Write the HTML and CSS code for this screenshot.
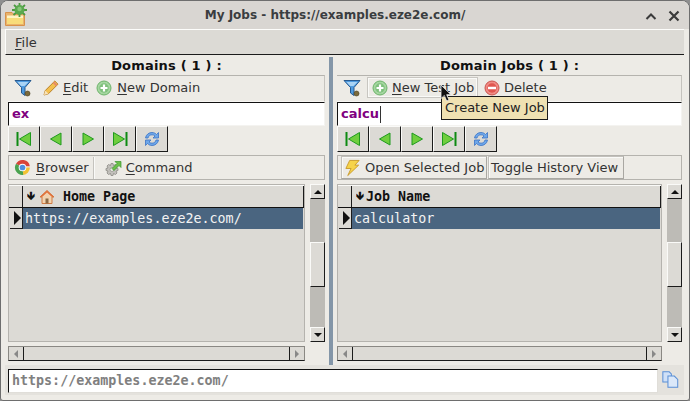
FILE: index.html
```html
<!DOCTYPE html>
<html lang="en">
<head>
<meta charset="utf-8">
<title>My Jobs</title>
<link rel="stylesheet" href="styles.css">
</head>
<body>
<svg class="defs" width="0" height="0" aria-hidden="true">
  <defs>
    <symbol id="filter" viewBox="0 0 18 18">
      <path d="M1 1.500H17L11 8.500V16.500L7.500 14V8.500Z" fill="#4f9be0" stroke="#27598f" stroke-width="1"/>
      <path d="M3.500 3H14.500L10.500 7H7Z" fill="#a9d3f5"/>
      <circle cx="13.500" cy="14.500" r="2.500" fill="#7b6a3c" stroke="#4a3f22" stroke-width=".6"/>
    </symbol>
    <symbol id="pencil" viewBox="0 0 16 16">
      <path d="M1 15L2.200 10.600 11.800 1 15 4.200 5.400 13.800Z" fill="#f3c04f" stroke="#b9822a" stroke-width="1"/>
      <path d="M1 15L2.200 10.600 5.400 13.800Z" fill="#f7e3bb"/>
      <path d="M10.500 2.300L13.700 5.500" stroke="#e78b66" stroke-width="2"/>
    </symbol>
    <symbol id="plus" viewBox="0 0 16 16">
      <circle cx="8" cy="8" r="7" fill="#a5d6a0" stroke="#6db36a" stroke-width="1"/>
      <circle cx="8" cy="8" r="4.700" fill="#7fc07c"/>
      <path d="M8 4.500V11.500M4.500 8H11.500" stroke="#fff" stroke-width="2.200"/>
    </symbol>
    <symbol id="minus" viewBox="0 0 16 16">
      <circle cx="8" cy="8" r="7" fill="#ef8b85" stroke="#c9544d" stroke-width="1"/>
      <circle cx="8" cy="8" r="4.700" fill="#e0564f"/>
      <path d="M4 8H12" stroke="#fff" stroke-width="2.400"/>
    </symbol>
    <symbol id="first" viewBox="0 0 16 16">
      <path d="M1.500 1V15" stroke="#0d8a12" stroke-width="2"/>
      <path d="M14.500 1.500V14.500L3.500 8Z" fill="#6fce3e" stroke="#1e9a1e" stroke-width="1"/>
    </symbol>
    <symbol id="prev" viewBox="0 0 16 16">
      <path d="M13 2V14L2.500 8Z" fill="#6fce3e" stroke="#1e9a1e" stroke-width="1"/>
    </symbol>
    <symbol id="next" viewBox="0 0 16 16">
      <path d="M3 2V14L13.500 8Z" fill="#6fce3e" stroke="#1e9a1e" stroke-width="1"/>
    </symbol>
    <symbol id="last" viewBox="0 0 16 16">
      <path d="M1.500 1.500V14.500L12.500 8Z" fill="#6fce3e" stroke="#1e9a1e" stroke-width="1"/>
      <path d="M14.500 1V15" stroke="#0d8a12" stroke-width="2"/>
    </symbol>
    <symbol id="refresh" viewBox="0 0 16 16">
      <path d="M1.500 7C2 3.500 5 1.500 8 1.500C10 1.500 11.500 2.300 12.500 3.500L14.500 1.500V7H9L11 5C10.300 4.300 9.300 3.800 8 3.800C6 3.800 4.500 5 4 7Z" fill="#6ea7ea" stroke="#3a72c4" stroke-width=".8"/>
      <path d="M14.500 9C14 12.500 11 14.500 8 14.500C6 14.500 4.500 13.700 3.500 12.500L1.500 14.500V9H7L5 11C5.700 11.700 6.700 12.200 8 12.200C10 12.200 11.500 11 12 9Z" fill="#6ea7ea" stroke="#3a72c4" stroke-width=".8"/>
    </symbol>
    <symbol id="chrome" viewBox="0 0 16 16">
      <path d="M8 8L1.900 4.500A7 7 0 0 1 14.900 6.800H8Z" fill="#d8443a"/>
      <path d="M8 8H14.900A7 7 0 0 1 8.700 15Z" fill="#f2c233"/>
      <path d="M8 8L8.700 15A7 7 0 0 1 1.900 4.500Z" fill="#4aa24f"/>
      <circle cx="8" cy="8" r="3.600" fill="#fff"/>
      <circle cx="8" cy="8" r="2.700" fill="#4f8fe0"/>
    </symbol>
    <symbol id="command" viewBox="0 0 18 18">
      <path d="M7 4.500L9 4.500 9.500 6.500 11.500 5.500 13 7 12 9 14 9.500V11.500L12 12 13 14 11.500 15.500 9.500 14.500 9 16.500H7L6.500 14.500 4.500 15.500 3 14 4 12 2 11.500V9.500L4 9 3 7 4.500 5.500 6.500 6.500Z" fill="#c2c0bb" stroke="#8b8984" stroke-width=".8"/>
      <circle cx="8" cy="10.500" r="2" fill="#edebe6" stroke="#85837e" stroke-width=".6"/>
      <path d="M8 9.500L13 4.500 11 2.500H17V8.500L15 6.500 10 11.500Z" fill="#6cc04a" stroke="#3b9430" stroke-width=".7"/>
    </symbol>
    <symbol id="bolt" viewBox="0 0 18 18">
      <path d="M6 1H16L11.500 6H15.500L4 17 7.500 9.500H2Z" fill="#f6d34a" stroke="#c99a2e" stroke-width="1"/>
    </symbol>
    <symbol id="home" viewBox="0 0 16 16">
      <path d="M8 1.500L15 8H13V14.500H3V8H1Z" fill="#f1d3b0" stroke="#cf7a43" stroke-width="1"/>
      <path d="M8 1.500L15 8H13L8 3.500 3 8H1Z" fill="#e2703a"/>
      <path d="M6.500 9.500H9.500V14.500H6.500Z" fill="#8a6a46"/>
    </symbol>
    <symbol id="copy" viewBox="0 0 20 20">
      <path d="M1 1H8.500L11 3.500V13H1Z" fill="#cfe0f7" stroke="#5a8fd6" stroke-width="1.200"/>
      <path d="M7 6H14.500L18.500 10V19H7Z" fill="#dbe8f9" stroke="#5a8fd6" stroke-width="1.200"/>
    </symbol>
    <symbol id="appicon" viewBox="0 0 24 24">
      <path d="M.500 9.500H7L8.500 11H19.500V22.500H.500Z" fill="#e9b36c" stroke="#d8924a" stroke-width="1"/>
      <path d="M2 15H18V21H2Z" fill="#f8dc7a"/>
      <path d="M2 12.500H18V15H2Z" fill="#fff3c4"/>
      <path d="M9 2L20 12M20 2L8.500 12M14.500 0V14M7 7H22" stroke="#4c9a41" stroke-width="1.800"/>
      <circle cx="14.500" cy="7" r="5" fill="#5ba94f"/>
      <circle cx="14.500" cy="6" r="2.200" fill="#86c878"/>
    </symbol>
  </defs>
</svg>

<div class="window">
  <header class="titlebar">
    <svg class="app-icon"><use href="#appicon"/></svg>
    <div class="title">My Jobs - https://examples.eze2e.com/</div>
    <div class="wm-controls">
      <svg class="wm-btn" viewBox="0 0 12 12"><path d="M1.500 9L6 4.500 10.500 9" fill="none" stroke="#3b3b3b" stroke-width="2"/></svg>
      <svg class="wm-btn" viewBox="0 0 12 12"><path d="M1.500 1.500L10.500 10.500M10.500 1.500L1.500 10.500" fill="none" stroke="#3b3b3b" stroke-width="2.200"/></svg>
    </div>
  </header>

  <div class="client">
    <nav class="menubar"><span class="menu-item"><u>F</u>ile</span></nav>

    <div class="split">
      <section class="pane">
        <h2 class="pane-title">Domains ( 1 ) :</h2>
        <div class="toolbar">
          <svg class="ico filter-ico"><use href="#filter"/></svg>
          <span class="tool tool-edit"><svg class="ico"><use href="#pencil"/></svg><span><u>E</u>dit</span></span>
          <span class="tool tool-new"><svg class="ico"><use href="#plus"/></svg><span><u>N</u>ew Domain</span></span>
        </div>
        <div class="search">ex</div>
        <div class="navs">
          <span class="nav"><svg class="nav-ico"><use href="#first"/></svg></span>
          <span class="nav"><svg class="nav-ico"><use href="#prev"/></svg></span>
          <span class="nav"><svg class="nav-ico"><use href="#next"/></svg></span>
          <span class="nav"><svg class="nav-ico"><use href="#last"/></svg></span>
          <span class="nav"><svg class="nav-ico"><use href="#refresh"/></svg></span>
        </div>
        <div class="actions">
          <span class="action action-browser"><svg class="ico chrome-ico"><use href="#chrome"/></svg><span><u>B</u>rowser</span></span>
          <span class="action action-command"><svg class="ico cmd-ico"><use href="#command"/></svg><span><u>C</u>ommand</span></span>
        </div>
        <div class="grid-wrap">
          <div class="table">
            <div class="thead">
              <span class="corner"></span>
              <span class="th"><span class="sort">🡻</span><svg class="home-ico"><use href="#home"/></svg><span class="th-label th-home">Home Page</span></span>
            </div>
            <div class="trow">
              <span class="marker"><i class="marker-tri"></i></span>
              <span class="td">https://examples.eze2e.com/</span>
            </div>
          </div>
          <div class="vscroll">
            <span class="sb-btn"><i class="tri-up"></i></span>
            <span class="sb-track"><span class="sb-thumb"></span></span>
            <span class="sb-btn"><i class="tri-down"></i></span>
          </div>
        </div>
        <div class="hscroll-row">
          <div class="hscroll">
            <span class="hs-btn"><i class="tri-left"></i></span>
            <span class="hs-thumb"></span>
            <span class="hs-btn"><i class="tri-right"></i></span>
          </div>
        </div>
      </section>

      <div class="splitter"></div>

      <section class="pane pane-right">
        <h2 class="pane-title">Domain Jobs ( 1 ) :</h2>
        <div class="toolbar">
          <svg class="ico filter-ico"><use href="#filter"/></svg>
          <span class="tool tool-hover"><svg class="ico"><use href="#plus"/></svg><span><u>N</u>ew Test Job</span></span>
          <span class="tool tool-del"><svg class="ico"><use href="#minus"/></svg><span>Delete</span></span>
        </div>
        <div class="search">calcu<i class="caret"></i></div>
        <div class="navs">
          <span class="nav"><svg class="nav-ico"><use href="#first"/></svg></span>
          <span class="nav"><svg class="nav-ico"><use href="#prev"/></svg></span>
          <span class="nav"><svg class="nav-ico"><use href="#next"/></svg></span>
          <span class="nav"><svg class="nav-ico"><use href="#last"/></svg></span>
          <span class="nav"><svg class="nav-ico"><use href="#refresh"/></svg></span>
        </div>
        <div class="actions actions-right">
          <span class="raised raised-open"><svg class="ico bolt-ico"><use href="#bolt"/></svg><span>Open Selected Job</span></span>
          <span class="raised raised-toggle">Toggle History View</span>
        </div>
        <div class="grid-wrap">
          <div class="table">
            <div class="thead">
              <span class="corner"></span>
              <span class="th"><span class="sort">🡻</span><span class="th-label">Job Name</span></span>
            </div>
            <div class="trow">
              <span class="marker"><i class="marker-tri"></i></span>
              <span class="td">calculator</span>
            </div>
          </div>
          <div class="vscroll">
            <span class="sb-btn"><i class="tri-up"></i></span>
            <span class="sb-track"><span class="sb-thumb"></span></span>
            <span class="sb-btn"><i class="tri-down"></i></span>
          </div>
        </div>
        <div class="hscroll-row">
          <div class="hscroll">
            <span class="hs-btn"><i class="tri-left"></i></span>
            <span class="hs-thumb"></span>
            <span class="hs-btn"><i class="tri-right"></i></span>
          </div>
        </div>
      </section>
    </div>

    <footer class="urlbar">
      <div class="url-input">https://examples.eze2e.com/</div>
      <svg class="copy-ico"><use href="#copy"/></svg>
    </footer>
  </div>

  <div class="tooltip">Create New Job</div>
  <svg class="cursor" viewBox="0 0 12 18"><path d="M1 1V14.500L4.300 11.500 6.700 17 9 16 6.700 10.700H11Z" fill="#111" stroke="#eee" stroke-width=".8"/></svg>
</div>
</body>
</html>
```
FILE: styles.css
```css
* { box-sizing: border-box; }
html, body { margin: 0; padding: 0; }
body {
  width: 690px;
  height: 401px;
  overflow: hidden;
  background: #8f8f8f;
  font: 13px "DejaVu Sans", sans-serif;
  color: #1c1c1c;
}
u { text-underline-offset: 2px; }
.defs { position: absolute; }

.window {
  position: relative;
  width: 690px;
  height: 401px;
  background: #edebe6;
  border: 1px solid #6e6e6e;
  border-radius: 8px 8px 3px 3px;
  overflow: hidden;
  display: flex;
  flex-direction: column;
}

.titlebar {
  flex: 0 0 28px;
  background: #d9d6d2;
  display: flex;
  align-items: center;
  position: relative;
}
.app-icon { position: absolute; left: 4px; top: 2px; width: 24px; height: 24px; }
.title {
  flex: 1;
  text-align: center;
  font-weight: bold;
  font-size: 12px;
  color: #3a3d40;
  padding-right: 20px;
}
.wm-controls {
  position: absolute;
  right: 9px;
  top: 9px;
  display: flex;
  gap: 11px;
}
.wm-btn { width: 12px; height: 12px; display: block; }

.client {
  flex: 1;
  margin: 0 5px 4px 4px;
  display: flex;
  flex-direction: column;
  min-height: 0;
  background: #edebe6;
}

.menubar {
  flex: 0 0 26px;
  background: #dcdad5;
  border-top: 1px solid #fdfdfb;
  border-left: 1px solid #fdfdfb;
  border-bottom: 1px solid #1b1b1b;
  padding: 4px 0 0 9px;
  line-height: 17px;
}
.menu-item { color: #333; }

.split {
  flex: 0 0 310px;
  display: flex;
  padding-left: 3px;
}
.pane { flex: 0 0 317px; display: flex; flex-direction: column; }
.pane-right { flex-basis: 345px; }
.splitter { flex: 0 0 4px; background: #8496a8; margin: 2px 4px 0; }

.pane-title {
  margin: 0;
  height: 20px;
  font-size: 13px;
  font-weight: bold;
  text-align: center;
  line-height: 21px;
  letter-spacing: .2px;
  color: #111;
}

.toolbar {
  height: 27px;
  border-top: 1px solid #b5b3ae;
  border-bottom: 1px solid #f7f6f3;
  border-right: 1px solid #c5c3be;
  display: flex;
  align-items: center;
  padding: 0 0 2px 6px;
  color: #333;
}
.ico { width: 16px; height: 16px; flex: none; display: block; }
.filter-ico { width: 18px; height: 18px; }
.tool { display: flex; align-items: center; gap: 4px; height: 21px; padding: 0 2px; }
.tool-edit { margin-left: 9px; margin-right: 4px; }
.tool-new { gap: 5px; }
.tool-hover {
  margin-left: 6px;
  border: 1px solid #c8c6c1;
  box-shadow: 0 0 0 1px #fafaf8 inset;
  width: 111px;
  padding-left: 4px;
}
.tool-del { margin-left: 4px; gap: 4px; }

.search {
  height: 24px;
  background: #fff;
  border: 1px solid #f4f3f0;
  border-top: 1px solid #111;
  border-left: 1px solid #111;
  font-weight: bold;
  font-size: 13px;
  line-height: 22px;
  color: #800080;
  padding-left: 3px;
  display: flex;
  align-items: center;
}
.caret { width: 1px; height: 17px; background: #333; margin-left: 1px; }

.navs { display: flex; height: 26px; }
.nav {
  width: 32px;
  height: 26px;
  background: #dcdad5;
  border-top: 1px solid #fafaf8;
  border-left: 1px solid #fafaf8;
  border-right: 1px solid #1b1b1b;
  border-bottom: 1px solid #1b1b1b;
  display: flex;
  align-items: center;
  justify-content: center;
}
.nav-ico { width: 16px; height: 16px; display: block; }

.actions {
  margin-top: 3px;
  height: 25px;
  border: 1px solid #b5b3ae;
  display: flex;
  align-items: center;
  padding-left: 5px;
  color: #333;
}
.action { display: flex; align-items: center; gap: 5px; height: 22px; }
.chrome-ico { width: 17px; height: 17px; }
.action-browser { padding-right: 4px; border-right: 1px solid #c5c3be; box-shadow: 1px 0 0 #fafaf8; }
.action-command { margin-left: 10px; gap: 4px; }
.cmd-ico { width: 18px; height: 18px; }

.actions-right { padding-left: 3px; }
.raised {
  display: flex;
  align-items: center;
  height: 23px;
  white-space: nowrap;
  border: 1px solid #c2c0bb;
  border-right-color: #a9a7a2;
  border-bottom-color: #a9a7a2;
  box-shadow: inset 1px 1px 0 #fafaf8;
}
.raised-open { width: 146px; padding-left: 2px; gap: 4px; }
.raised-toggle { width: 136px; padding-left: 2px; margin-left: 1px; }
.bolt-ico { width: 17px; height: 18px; }

.grid-wrap { display: flex; margin-top: 4px; height: 158px; }
.table {
  flex: 0 0 297px;
  background: #dcdad5;
  border: 1px solid #b5b3ae;
}
.pane-right .table { flex-basis: 325px; }
.thead { display: flex; height: 23px; border-top: 1px solid #fafaf8; border-bottom: 1px solid #111; }
.corner { width: 12px; background: #dcdad5; margin-left: 1px; }
.th {
  flex: 1;
  display: flex;
  align-items: center;
  border-left: 1px solid #1b1b1b;
  border-right: 1px solid #1b1b1b;
  padding-left: 4px;
  font: bold 13.33px "DejaVu Sans Mono", monospace;
  color: #111;
}
.sort { font: bold 11px "DejaVu Sans", sans-serif; width: 10px; display: inline-block; overflow: hidden; }
.home-ico { width: 16px; height: 16px; margin-left: 2px; }
.th-home { margin-left: 8px; }
.trow { display: flex; height: 21px; }
.marker {
  width: 13px;
  margin-left: 1px;
  background: #dcdad5;
  border-right: 1px solid #1b1b1b;
  border-bottom: 1px solid #1b1b1b;
  display: flex;
  align-items: center;
  justify-content: center;
}
.marker-tri { border-left: 7px solid #111; border-top: 7px solid transparent; border-bottom: 7px solid transparent; margin-left: 3px; }
.td {
  flex: 1;
  margin-right: 1px;
  background: #4a6580;
  color: #f3f3f3;
  font: 13.33px "DejaVu Sans Mono", monospace;
  line-height: 22px;
  padding-left: 2px;
}

.vscroll {
  margin-left: 5px;
  width: 15px;
  display: flex;
  flex-direction: column;
}
.sb-btn {
  flex: 0 0 15px;
  background: #dcdad5;
  border-top: 1px solid #fafaf8;
  border-left: 1px solid #fafaf8;
  border-right: 1px solid #1b1b1b;
  border-bottom: 1px solid #1b1b1b;
  display: flex;
  align-items: center;
  justify-content: center;
}
.sb-track { flex: 1; background: #bdbbb6; padding-top: 43px; }
.sb-thumb {
  display: block;
  height: 45px;
  background: #dcdad5;
  border-top: 1px solid #fafaf8;
  border-left: 1px solid #fafaf8;
  border-right: 1px solid #1b1b1b;
  border-bottom: 1px solid #1b1b1b;
}
.tri-up { border-bottom: 4px solid #111; border-left: 4px solid transparent; border-right: 4px solid transparent; }
.tri-down { border-top: 4px solid #111; border-left: 4px solid transparent; border-right: 4px solid transparent; }

.hscroll-row { margin-top: 4px; height: 15px; padding-right: 20px; }
.hscroll {
  display: flex;
  height: 15px;
  background: #bdbbb6;
  border: 1px solid #8a8883;
  border-bottom-color: #1b1b1b;
}
.hs-btn {
  flex: 0 0 15px;
  display: flex;
  align-items: center;
  justify-content: center;
  background: #dcdad5;
  border-right: 1px solid #1b1b1b;
}
.hs-btn:last-child { border-right: 0; border-left: 1px solid #1b1b1b; }
.hs-thumb { flex: 1; background: #dcdad5; }
.tri-left { border-right: 4px solid #888; border-top: 4px solid transparent; border-bottom: 4px solid transparent; }
.tri-right { border-left: 4px solid #888; border-top: 4px solid transparent; border-bottom: 4px solid transparent; }

.urlbar {
  flex: 0 0 30px;
  margin-bottom: 1px;
  display: flex;
  align-items: flex-start;
  padding: 4px 0 0 3px;
  background: #e4e2dd;
}
.url-input {
  width: 650px;
  height: 24px;
  background: #fff;
  border: 1px solid #e0ded9;
  border-top: 1px solid #111;
  border-left: 1px solid #111;
  padding-left: 3px;
  font: bold 13.33px "DejaVu Sans Mono", monospace;
  line-height: 22px;
  color: #808080;
}
.copy-ico { width: 17px; height: 17px; margin: 2px 0 0 4px; }

.tooltip {
  position: absolute;
  left: 440px;
  top: 95px;
  width: 107px;
  height: 24px;
  background: #efe1b2;
  border: 1px solid #1b1b1b;
  line-height: 22px;
  padding-left: 3px;
  color: #222;
}
.cursor { position: absolute; left: 439px; top: 83px; width: 12px; height: 18px; }
```
